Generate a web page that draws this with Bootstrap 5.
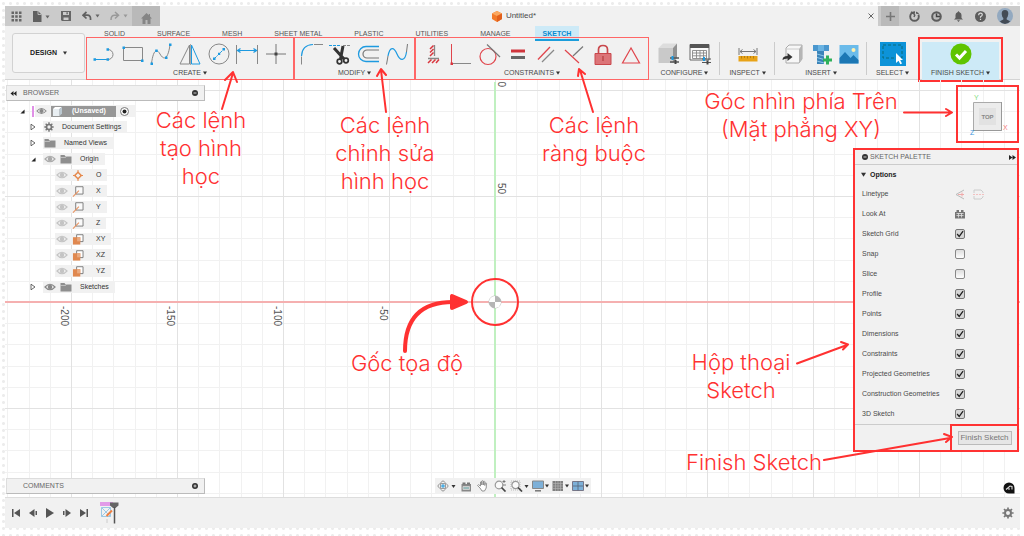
<!DOCTYPE html>
<html lang="vi">
<head>
<meta charset="utf-8">
<meta name="viewport" content="width=device-width, initial-scale=1">
<title>Untitled* - Sketch</title>
<link href="https://cdn.jsdelivr.net/npm/bootstrap@5.3.0/dist/css/bootstrap.min.css" rel="stylesheet">
<style>
:root{--ink:#4a4a4a;--chrome:#f1f1f1;--strip:#cbcbcb;--note:#ff3131}
body{font-family:"Liberation Sans",Arial,sans-serif;font-size:7px;line-height:10px;color:var(--ink);
 background:#fff radial-gradient(circle,#ececec 1px,transparent 2px) 0 0/7px 7px;padding:6px 4px 8px 5px}
button{font:inherit;color:inherit;background:none;border:0;padding:0;line-height:inherit}
svg{display:block;flex:none;fill:none}
.app{min-height:calc(100vh - 14px);background:#fff}
.titlebar{height:20px;background:var(--strip)}
.quick{width:127px;padding:0 4px}
.quick button,.tools-right button{width:14px;height:20px;display:flex;align-items:center;justify-content:center}
.quick .wide,.tools-right .wide{width:19px}
.home-tab{width:28px;background:#b9b9b9;display:flex;align-items:center;justify-content:center}
.doc-tab{background:var(--chrome);font-size:8px}
.tools-right .new-tab{width:18px;background:#bababa}
.tools-right{width:142px;padding:0 5px 0 3px}
.ribbon{height:54px;background:var(--chrome);border-bottom:1px solid #d4d4d4}
.design{width:73px;height:40px;margin:7px 1px 0 7px;border:1px solid #d2d2d2;border-radius:3px;font-weight:bold;color:#222;background:#f5f5f5}
.tabs{height:11px;padding-left:10px;gap:16px}
.tabs a{color:#555;text-decoration:none;padding:3px 8px 0;height:11px}
.tabs a.active{height:15px;background:#cdeaf7;color:#0a8ad0;font-weight:bold;border-bottom:2px solid #1b9ddb}
.tool-group{height:43px;padding:4px 3px 0;border:1px solid transparent;display:flex;flex-direction:column;position:relative}
.tool-group.noted{border-color:#f66}
.tool-group .cap{margin-top:2px;width:100%;text-align:center}
.tool-group .set{display:flex;justify-content:space-around}
.tool-group .set button{flex:1 0 0;display:flex;justify-content:center}
.rule::after{content:"";position:absolute;right:-1px;top:4px;bottom:4px;width:1px;background:#ccc}
.w-create{width:208px}.w-modify{width:121px}.w-cons{width:234px}.w-conf{width:71px}.w-insp{width:55px}.w-ins{width:92px}.w-sel{width:51px}
.w-fin{width:85px;height:45px;border:2px solid #f33;padding:3px 2px 0}
.w-fin .fill{background:#cdeaf7;height:38px}
.canvas{display:grid;grid-template-columns:1fr auto 1fr;padding:5px 1px 3px;position:relative}
.sheet{position:absolute;inset:0;width:100%;height:100%}
.panel-bar{width:199px;height:16px;background:var(--chrome);border:1px solid #ddd;border-right-color:#bbb;border-bottom-color:#bbb;color:#666;padding:0 6px 0 3px}
.panel-bar .mark-slot{width:13px}
.tree{list-style:none;margin:2px 0 0;padding:0;color:#333}
.tree li{height:16px;display:flex;align-items:center}
.tree .tw{width:12px;height:12px;display:flex;align-items:center;justify-content:center}
.tree .bar{background:var(--chrome);height:12px;display:flex;align-items:center;padding:0 6px 0 1px}
.lv0{padding-left:10px}.lv1{padding-left:21px}.lv2{padding-left:49px}
.lv1 .bar{margin-left:4px}
.unsaved{background:#979797;color:#fff;font-weight:bold;height:11px;width:65px;padding-left:2px;gap:10px;display:flex;align-items:center}
.tag{width:2px;height:11px;background:#e090e6;margin-right:1px;margin-left:4px}
.nav-strip{height:16px;background:var(--chrome);padding:0 2px;gap:3px}
.nav-strip button{display:flex;align-items:center;height:16px}
.cube-box{width:63px;height:58px;border:2px solid #f33}
.palette{width:166px;border:2px solid #f33;background:var(--chrome);margin-top:5px}
.palette header{height:15px;border-bottom:1px solid #ccc;color:#666;padding:0 1px 0 7px;gap:2px}
.palette h2{font-size:7px;line-height:20px;margin:0;font-weight:bold;color:#222;height:19px;padding-left:6px}
.opt{height:20px;padding-left:7px}
.opt label,.opt .lbl{width:93px}
.opt input{appearance:none;width:10px;height:10px;margin:0;border:1px solid #888;border-radius:2px;background:linear-gradient(#ddd,#fff)}
.opt input:checked{border-color:#777;background:url("data:image/svg+xml,%3Csvg xmlns='http://www.w3.org/2000/svg' viewBox='0 0 7 7'%3E%3Cpath d='M1 3.5 2.8 5.6 6.2 1' fill='none' stroke='%23222' stroke-width='1.1'/%3E%3C/svg%3E") #d5d5d5}
.palette footer{height:26px;border-top:1px solid #ccc}
.fin-box{width:69px;border:2px solid #f33;margin:-1px -2px -2px 0}
.fin-box button{font-size:8px;line-height:10px;width:54px;height:14px;border:1px solid #bbb;background:#e6e6e6;color:#777;white-space:nowrap}
.timeline{height:31px;background:var(--chrome);border-top:1px solid #ddd;padding:0 6px 0 2px}
.timeline button{width:17px;height:20px;display:flex;align-items:center;justify-content:center}
.note{position:absolute;color:var(--note);font-family:Inter,"Open Sans",sans-serif;font-weight:300;font-size:22px;line-height:28px;text-align:center;margin:0;white-space:nowrap}
.arrows{position:absolute;top:0;pointer-events:none;stroke:var(--note);stroke-width:2;stroke-linecap:round;stroke-linejoin:round}
.from-left{left:-5px}.from-right{right:0}
.n1{left:146px;top:100px;width:100px}.n2{left:320px;top:105px;width:120px}.n3{left:529px;top:105px;width:120px}
.n4{right:114px;top:81px;width:210px}.n5{left:337px;top:343px;width:130px}.n6{right:219px;top:342px;width:120px}.n7{right:191px;top:442px;width:150px}
</style>
<script src="https://cdn.jsdelivr.net/npm/bootstrap@5.3.0/dist/js/bootstrap.bundle.min.js"></script>
</head>
<body>
<svg width="0" height="0" class="position-absolute" aria-hidden="true">
<symbol id="eye" viewBox="0 0 12 8"><path d="M1 4Q6-1.500 11 4Q6 9.500 1 4Z" fill="#f4f4f4" stroke="currentColor" stroke-width="1.200"/><circle cx="6" cy="4" r="2.300" fill="currentColor"/></symbol>
<symbol id="folder" viewBox="0 0 12 10"><path d="M.5 9.500V1h4l1 1.500h6v7z" fill="#8e8e8e"/><path d="M.5 3.500h5l1-1" stroke="#ddd" stroke-width=".6"/></symbol>
<symbol id="shut" viewBox="0 0 6 8"><path d="M1 1.200 5 4 1 6.800Z" stroke="#444" stroke-width=".8" fill="#fff"/></symbol>
<symbol id="open" viewBox="0 0 6 6"><path d="M5.500.5v5h-5z" fill="#222"/></symbol>
<symbol id="gear" viewBox="0 0 12 12"><circle cx="6" cy="6" r="3" stroke="#777" stroke-width="2"/><path d="M6 .4v2M6 9.600v2M.4 6h2M9.600 6h2M2 2l1.500 1.500M8.500 8.500 10 10M10 2 8.500 3.500M3.500 8.500 2 10" stroke="#777" stroke-width="1.700"/></symbol>
<symbol id="axis" viewBox="0 0 12 12"><path d="M3.500 .8h8v8h-8z" fill="#fafafa" stroke="#777"/><path d="M.5 11.500 7 5" stroke="#e8915e" stroke-width="1.200"/></symbol>
<symbol id="plane" viewBox="0 0 12 12"><path d="M4.500.8h7v7.500h-7z" fill="#fff" stroke="#777"/><path d="M.5 3.500h8v8h-8z" fill="#e0884f"/><path d="M5 3.500h3.500V8H5z" fill="#e9aa80"/></symbol>
<symbol id="caret" viewBox="0 0 4 4"><path d="M0 .5h4L2 3.800z" fill="#333"/></symbol>
<symbol id="minus" viewBox="0 0 6 6"><circle cx="3" cy="3" r="3" fill="#333"/><path d="M1.500 3h3" stroke="#ccc"/></symbol>
</svg>
<div class="app d-flex flex-column position-relative">
<div class="titlebar d-flex">
 <div class="quick d-flex align-items-center justify-content-between">
  <button aria-label="Data panel"><svg width="11" height="11" viewBox="0 0 11 11"><path d="M.5.500h2.500v2.500H.5zM4.200.500h2.500v2.500H4.200zM8 .500h2.500v2.500H8zM.5 4.200h2.500v2.500H.5zM4.200 4.200h2.500v2.500H4.200zM8 4.200h2.500v2.500H8zM.5 8h2.500v2.500H.5zM4.200 8h2.500v2.500H4.200zM8 8h2.500v2.500H8z" fill="#666"/></svg></button>
  <button aria-label="File" class="wide"><svg width="18" height="11" viewBox="0 0 18 11"><path d="M1 0h5l3.500 3.500V11H1z" fill="#606060"/><path d="M6 0v3.500h3.500" stroke="#ccc" stroke-width=".8"/><path d="M13.500 4.500h4l-2 3z" fill="#666"/></svg></button>
  <button aria-label="Save"><svg width="10" height="10" viewBox="0 0 10 10"><path d="M0 0h10v10H1L0 9z" fill="#666"/><path d="M2 1h6v3H2zM2.500 6.500h5V9h-5z" fill="#ccc"/><path d="M5.500 1.300h1.200v2H5.500z" fill="#555"/></svg></button>
  <button aria-label="Undo" class="wide"><svg width="18" height="10" viewBox="0 0 18 10"><path d="M4.500 1 1 4.200 4.500 7.500M1.500 4.200H5Q9 4 8.500 9" stroke="#606060" stroke-width="1.700"/><path d="M13.500 3.500h4l-2 3z" fill="#666"/></svg></button>
  <button aria-label="Redo" class="wide"><svg width="18" height="10" viewBox="0 0 18 10"><path d="M5 1l3.500 3.200L5 7.500M8 4.200H5Q1 4 1 9" stroke="#999" stroke-width="1.500"/><path d="M13.500 3.500h4l-2 3z" fill="#999"/></svg></button>
 </div>
 <button class="home-tab" aria-label="Home"><svg class="mt-1" width="11" height="11" viewBox="0 0 11 11"><path d="M5.500 0 0 5.500h1.500V11h3V7h2v4h3V5.500H11L9 3.500V1H7.800v1.300z" fill="#858585"/></svg></button>
 <div class="doc-tab flex-grow-1 d-flex align-items-center">
  <div class="flex-grow-1 d-flex align-items-center justify-content-center gap-1"><svg width="10" height="11" viewBox="0 0 10 11"><path d="M5 0l5 2.500v5.500L5 11 0 8V2.500z" fill="#f27a2a"/><path d="M5 0l5 2.500L5 5 0 2.500z" fill="#fba860"/><path d="M5 5l5-2.500V8l-5 3z" fill="#e2601c"/></svg><span>Untitled*</span></div>
  <button aria-label="Close" class="me-1"><svg width="6" height="6" viewBox="0 0 6 6"><path d="M.5.500l5 5M5.500.500l-5 5" stroke="#666"/></svg></button>
 </div>
 <div class="tools-right d-flex justify-content-between">
  <button class="new-tab" aria-label="New"><svg width="9" height="9" viewBox="0 0 9 9"><path d="M4.500 0v9M0 4.500h9" stroke="#777" stroke-width="1.600"/></svg></button>
  <button aria-label="Extensions"><svg width="11" height="11" viewBox="0 0 11 11"><circle cx="5.500" cy="5.500" r="4.300" stroke="#5c5c5c" stroke-width="1.900"/><path d="M2 1l4 2.500-1 2.500" stroke="#5c5c5c" stroke-width="1.500"/><path d="M6.500 0v3.500h3" stroke="#cbcbcb"/></svg></button>
  <button aria-label="Job status"><svg width="11" height="11" viewBox="0 0 11 11"><circle cx="5.500" cy="5.500" r="4.300" fill="#bbb" stroke="#5c5c5c" stroke-width="2"/><path d="M5.500 2.500v3H9" stroke="#444" stroke-width="1.400"/></svg></button>
  <button aria-label="Notifications"><svg width="9" height="11" viewBox="0 0 9 11"><path d="M4.500 0l1 1.200Q7.500 2 7.500 4v3L9 8.500H0L1.500 7V4Q1.500 2 3.500 1.200zM3 9.200h3L4.500 11z" fill="#5c5c5c"/></svg></button>
  <button aria-label="Help"><svg width="11" height="11" viewBox="0 0 11 11"><circle cx="5.500" cy="5.500" r="5.500" fill="#5c5c5c"/><path d="M3.700 4.200q0-2 1.800-2t1.800 1.600q0 1-1.800 2v1M5.500 7.800v1.300" stroke="#ddd" stroke-width="1.200"/></svg></button>
  <button aria-label="Account" class="wide"><svg width="16" height="16" viewBox="0 0 16 16"><circle cx="8" cy="8" r="8" fill="#93a9c0"/><path d="M8 2q3.500 0 3.300 4-.4 3-1.600 4v1.500l3.500 1.700Q11 16 8 16t-5.200-2.800l3.500-1.700V10Q5 9 4.700 6 4.500 2 8 2z" fill="#434b55"/></svg></button>
 </div>
</div>
<div class="ribbon d-flex">
 <button class="design">DESIGN <svg class="d-inline ms-1" width="4" height="4"><use href="#caret"/></svg></button>
 <div class="flex-grow-1 d-flex flex-column">
 <nav class="tabs d-flex"><a href="#">SOLID</a><a href="#">SURFACE</a><a href="#">MESH</a><a href="#" class="text-nowrap">SHEET METAL</a><a href="#">PLASTIC</a><a href="#">UTILITIES</a><a href="#">MANAGE</a><a href="#" class="active">SKETCH</a></nav>
 <div class="d-flex">
  <div class="tool-group noted w-create"><div class="set">
   <button aria-label="Line"><svg width="24" height="24" viewBox="0 0 24 24"><path d="M3 17.500h13a5 5 0 0 0 0-10" stroke="#888"/><path d="M3 17.500h11" stroke="#1d9ae0"/><path d="M1.500 16.200h2.500v2.500H1.500zM14.500 16.200h2.500v2.500h-2.500zM14.500 6.200h2.500v2.500h-2.500z" fill="#1d9ae0"/></svg></button>
   <button aria-label="Rectangle"><svg width="24" height="24" viewBox="0 0 24 24"><path d="M2.500 5.500h19v13h-19z" stroke="#888"/><path d="M1.500 4.500h2.500V7H1.500zM20 17.500h2.500V20H20z" fill="#1d9ae0"/></svg></button>
   <button aria-label="Spline"><svg width="24" height="24" viewBox="0 0 24 24"><path d="M2.500 21.500C4 10 7 5 11 12c4 7 8 5 10-9" stroke="#888"/><path d="M1.500 20.500H4V23H1.500zM6.200 7.500h2.500V10H6.200zM16 14.500h2.500V17H16zM20 1.500h2.500V4H20z" fill="#1d9ae0"/></svg></button>
   <button aria-label="Mirror"><svg width="24" height="24" viewBox="0 0 24 24"><path d="M11.500 3v19H2z" stroke="#888"/><path d="M13.500 3v19H22z" stroke="#1d9ae0"/><path d="M12.500 2v21" stroke="#888" stroke-width=".7"/></svg></button>
   <button aria-label="Circle"><svg width="24" height="24" viewBox="0 0 24 24"><circle cx="12" cy="12" r="10" stroke="#888"/><path d="M7.500 16.500 16.500 7.500" stroke="#1d9ae0" stroke-dasharray="3 1"/><path d="M6 15.500h2.500V18H6zM15.500 6H18v2.500h-2.500zM11 10.800h2.200V13H11z" fill="#1d9ae0"/></svg></button>
   <button aria-label="Dimension"><svg width="24" height="24" viewBox="0 0 24 24"><path d="M1.500 3v19M22.500 3v19" stroke="#888"/><path d="M3 8.500h18M5.500 6.500l-3 2 3 2M18.500 6.500l3 2-3 2" stroke="#1d9ae0" stroke-width="1.200"/></svg></button>
   <button aria-label="Point"><svg width="24" height="24" viewBox="0 0 24 24"><path d="M12 2v20M2 12h20" stroke="#777"/><path d="M10.500 10.500h3v3h-3z" fill="#444"/></svg></button>
  </div><button class="cap">CREATE <svg class="d-inline" width="4" height="4"><use href="#caret"/></svg></button></div>
  <div class="tool-group noted w-modify"><div class="set">
   <button aria-label="Fillet"><svg width="24" height="24" viewBox="0 0 24 24"><path d="M1.500 22.500v-8M14 2.500h9" stroke="#888"/><path d="M1.500 14Q2 3 13 2.500" stroke="#1d9ae0" stroke-width="1.200"/></svg></button>
   <button aria-label="Trim"><svg width="24" height="24" viewBox="0 0 24 24"><path d="M1 3.500h12" stroke="#1d9ae0" stroke-dasharray="3 1"/><path d="M15 3.500h8" stroke="#888" stroke-dasharray="3 1"/><path d="M6 6l10 11M15 4 12.500 17" stroke="#333" stroke-width="3"/><circle cx="11.500" cy="19.500" r="2.300" stroke="#333" stroke-width="1.700"/><circle cx="18" cy="18.500" r="2.300" stroke="#333" stroke-width="1.700"/></svg></button>
   <button aria-label="Offset"><svg width="24" height="24" viewBox="0 0 24 24"><path d="M22 4.500H9a7.500 7.500 0 0 0 0 15h13" stroke="#1d9ae0" stroke-width="1.300"/><path d="M22 8H10a4 4 0 0 0 0 8h12" stroke="#777" stroke-width="1.200"/></svg></button>
   <button aria-label="Curve"><svg width="24" height="24" viewBox="0 0 24 24"><path d="M1.500 22.500 3 14M22.500 2l-1 8" stroke="#777"/><path d="M3 14C5 4 9 5 12 12s8 8 9.500-2" stroke="#1d9ae0" stroke-width="1.200"/></svg></button>
  </div><button class="cap">MODIFY <svg class="d-inline" width="4" height="4"><use href="#caret"/></svg></button></div>
  <div class="tool-group noted w-cons"><div class="set">
   <button aria-label="Horizontal/Vertical"><svg width="24" height="24" viewBox="0 0 24 24"><path d="M13.500 3v11M7 16.500h11" stroke="#888" stroke-width="1.300"/><path d="M9 7l3.500-3.500M9 10.500 12.500 7M9 14l3.500-3.500M7 21l3.500-3.500M11 21l3.500-3.500M15 21l3-3.500" stroke="#d9363e" stroke-width="1.500"/></svg></button>
   <button aria-label="Coincident"><svg width="24" height="24" viewBox="0 0 24 24"><path d="M2.500 2v19" stroke="#e0454c"/><path d="M3 21.500h19" stroke="#888"/><path d="M1.500 20.500h2.500V23H1.500z" fill="#d9363e"/></svg></button>
   <button aria-label="Tangent"><svg width="24" height="24" viewBox="0 0 24 24"><circle cx="10" cy="14.500" r="8" stroke="#e0454c" stroke-width="1.200"/><path d="M9 2.500 22 15" stroke="#777" stroke-width="1.200"/></svg></button>
   <button aria-label="Equal"><svg width="24" height="24" viewBox="0 0 24 24"><path d="M5 9h14" stroke="#d0353c" stroke-width="3"/><path d="M5 15.500h14" stroke="#666" stroke-width="3"/></svg></button>
   <button aria-label="Parallel"><svg width="24" height="24" viewBox="0 0 24 24"><path d="M4 17.500 16 5" stroke="#e0454c" stroke-width="1.300"/><path d="M8 20 20 8" stroke="#888" stroke-width="1.300"/></svg></button>
   <button aria-label="Perpendicular"><svg width="24" height="24" viewBox="0 0 24 24"><path d="M3 8l14 13" stroke="#e0454c" stroke-width="1.200"/><path d="M11 14 21 4.500" stroke="#777" stroke-width="1.200"/></svg></button>
   <button aria-label="Fix"><svg width="24" height="24" viewBox="0 0 24 24"><path d="M7.500 12V7.500q0-4 4.500-4t4.500 4V12" stroke="#c9474c" stroke-width="1.700"/><path d="M4 11.500h16v11H4z" fill="#dc7478" stroke="#c9474c"/><path d="M12 14v5" stroke="#a33"/></svg></button>
   <button aria-label="Symmetry"><svg width="24" height="24" viewBox="0 0 24 24"><path d="M12 6 3.500 21h17z" stroke="#e0454c" stroke-width="1.200"/></svg></button>
  </div><button class="cap">CONSTRAINTS <svg class="d-inline" width="4" height="4"><use href="#caret"/></svg></button></div>
  <div class="tool-group rule w-conf"><div class="set">
   <button aria-label="Configure"><svg width="24" height="24" viewBox="0 0 24 24"><path d="M1.500 6 6 1.500h14L16 6z" fill="#ddd"/><path d="M1.500 6H16v15H1.500z" fill="#c9c9c9"/><path d="M16 6l4-4.500V16l-4 5z" fill="#929292"/><path d="M13 16h9M13 20h9" stroke="#555" stroke-width="1.300"/><path d="M15.500 14v4" stroke="#1d9ae0" stroke-width="2"/><path d="M18.500 18v4" stroke="#444" stroke-width="2"/></svg></button>
   <button aria-label="Table"><svg width="24" height="24" viewBox="0 0 24 24"><path d="M2 2.500h19V18H2z" fill="#fafafa" stroke="#666"/><path d="M2 2h19v4H2z" fill="#555"/><path d="M4.500 8.500h14v8h-14zM4.500 11h14M4.500 13.800h14M8.500 8.500v8M12 8.500v8M15.500 8.500v8" stroke="#888" stroke-width=".9"/><path d="M14 17h9M14 20.500h9" stroke="#555" stroke-width="1.200"/><path d="M16 15v4" stroke="#1d9ae0" stroke-width="2"/><path d="M19.500 18.500v4" stroke="#444" stroke-width="2"/></svg></button>
  </div><button class="cap">CONFIGURE <svg class="d-inline" width="4" height="4"><use href="#caret"/></svg></button></div>
  <div class="tool-group rule w-insp"><div class="set"><button aria-label="Measure"><svg width="24" height="24" viewBox="0 0 24 24"><path d="M3 6v7M21 6v7M4 9.500h16M6.500 7.500 4 9.500l2.500 2M17.500 7.500 20 9.500l-2.500 2" stroke="#777"/><path d="M2.500 14h19v5.500h-19z" fill="#e8a317"/><path d="M5.500 14v2.500M8.500 14v2M11.500 14v2.500M14.500 14v2M17.500 14v2.500" stroke="#b57e12"/></svg></button></div><button class="cap">INSPECT <svg class="d-inline" width="4" height="4"><use href="#caret"/></svg></button></div>
  <div class="tool-group rule w-ins"><div class="set">
   <button aria-label="Insert derive"><svg width="24" height="24" viewBox="0 0 24 24"><path d="M5 6l3-3h13v14l-3 4H5z" fill="#f7f7f7" stroke="#aaa"/><path d="M18 7l3-4v14l-3 4z" fill="#b5b5b5"/><path d="M5 7h13" stroke="#ccc"/><path d="M1.500 18q0-4 5-4V11l5 4-5 4v-2.500q-3 0-5 1.500z" fill="#333"/></svg></button>
   <button aria-label="Insert fastener"><svg width="24" height="24" viewBox="0 0 24 24"><path d="M4 3h16v6H4z" fill="#4a97ce"/><path d="M9 3h6v6H9z" fill="#6ab3e2"/><path d="M8 9h7v13H8z" fill="#3b84b8"/><path d="M8 12l7 2M8 15.500l7 2M8 19l7 2" stroke="#8cc6ea"/><path d="M18.500 13.500v9M14 18h9" stroke="#2fb15a" stroke-width="3"/></svg></button>
   <button aria-label="Insert image"><svg width="24" height="24" viewBox="0 0 24 24"><path d="M2.500 3h19v18.500h-19z" fill="#6bbbea"/><path d="M2.500 16 8 10l5.500 6 3-3 5 5v3.500h-19z" fill="#1c77b4"/><circle cx="16.500" cy="8" r="2" fill="#fff1b0"/></svg></button>
  </div><button class="cap">INSERT <svg class="d-inline" width="4" height="4"><use href="#caret"/></svg></button></div>
  <div class="tool-group w-sel"><div class="set"><button aria-label="Select"><svg width="26" height="24" viewBox="0 0 26 24"><path d="M0 0h26v24H0z" fill="#0d93d8"/><path d="M3 3h19v13H3z" stroke="#0b6a78" stroke-dasharray="3 2"/><path d="M16 11v10l2.500-2.300 1.800 3.500 1.700-.8-1.800-3.400H23z" fill="#fff"/></svg></button></div><button class="cap">SELECT <svg class="d-inline" width="4" height="4"><use href="#caret"/></svg></button></div>
  <div class="tool-group w-fin"><div class="fill"><div class="set"><button aria-label="Finish"><svg width="24" height="24" viewBox="0 0 24 24"><circle cx="12" cy="12" r="10.500" fill="#5fc400"/><path d="M7 12.500l3.500 3.500 6.500-7" stroke="#fff" stroke-width="3"/></svg></button></div><button class="cap text-nowrap">FINISH SKETCH <svg class="d-inline" width="4" height="4"><use href="#caret"/></svg></button></div></div>
 </div></div>
</div>
<main class="canvas flex-grow-1">
 <svg class="sheet" font-size="10">
  <defs><pattern id="grid" x="490" y="222" width="106" height="106" patternUnits="userSpaceOnUse"><path d="M21.500 0v106M42.500 0v106M64.500 0v106M85.500 0v106M0 21.500h106M0 42.500h106M0 64.500h106M0 85.500h106" stroke="#f1f1f1"/><path d="M.5 0v106M0 .5h106" stroke="#e2e2e2"/></pattern></defs>
  <rect width="100%" height="100%" fill="url(#grid)"/>
  <line x1="0" y1="222" x2="100%" y2="222" stroke="#f5b0b0" stroke-width="2"/>
  <line x1="490" y1="2" x2="490" y2="100%" stroke="#c0f0c0" stroke-width="2"/>
  <g fill="#555"><text transform="translate(56 226) rotate(90)">-200</text><text transform="translate(162 226) rotate(90)">-150</text><text transform="translate(269 226) rotate(90)">-100</text><text transform="translate(375 226) rotate(90)">-50</text>
  <text transform="translate(493 114) rotate(90)" text-anchor="end">50</text><text transform="translate(493 7) rotate(90)" text-anchor="end">0</text></g>
  <circle cx="490" cy="222" r="6" fill="#ddd" stroke="#bbb"/><path d="M490 222h6a6 6 0 0 1-6 6z" fill="#fff"/><path d="M490 222v-6a6 6 0 0 0-6 6z" fill="#fff"/><path d="M490 222v-6a6 6 0 0 1 6 6zM490 222v6a6 6 0 0 1-6-6z" fill="#b5b5b5"/>
 </svg>
 <div class="d-flex flex-column position-relative">
  <div class="panel-bar d-flex align-items-center"><span class="mark-slot"><svg width="7" height="5" viewBox="0 0 6 5"><path d="M3 0v5L0 2.500zM6 0v5L3 2.500z" fill="#222"/></svg></span><span class="flex-grow-1">BROWSER</span><svg width="6" height="6"><use href="#minus"/></svg></div>
  <ul class="tree">
   <li class="lv0"><span class="tw"><svg width="5" height="5"><use href="#open"/></svg></span><span class="tag"></span><span class="bar"><svg width="11" height="8" color="#888" class="me-1"><use href="#eye"/></svg><span class="unsaved"><svg width="9" height="9" viewBox="0 0 9 9"><path d="M0 2h6.500v7H0z" fill="#e8eef2"/><path d="M0 2l2-2h7L6.500 2z" fill="#fff"/><path d="M6.500 2 9 0v6.500L6.500 9z" fill="#bbc8d0"/></svg>(Unsaved)</span><svg class="ms-1" width="9" height="9" viewBox="0 0 9 9"><circle cx="4.500" cy="4.500" r="4" fill="#fff" stroke="#777"/><circle cx="4.500" cy="4.500" r="2" fill="#222"/></svg></span></li>
   <li class="lv1"><span class="tw"><svg width="6" height="8"><use href="#shut"/></svg></span><span class="bar"><svg width="10" height="10" class="me-2"><use href="#gear"/></svg>Document Settings</span></li>
   <li class="lv1"><span class="tw"><svg width="6" height="8"><use href="#shut"/></svg></span><span class="bar"><svg width="12" height="10" class="me-2"><use href="#folder"/></svg>Named Views</span></li>
   <li class="lv1"><span class="tw"><svg width="5" height="5"><use href="#open"/></svg></span><span class="bar"><svg width="12" height="8" color="#aaa" class="me-1"><use href="#eye"/></svg><svg width="12" height="10" class="me-2"><use href="#folder"/></svg>Origin</span></li>
   <li class="lv2"><span class="bar"><svg width="12" height="8" color="#c4c4c4" class="me-1"><use href="#eye"/></svg><svg width="12" height="11" viewBox="0 0 12 11" class="me-2"><path d="M6 2.200 9.300 5.500 6 8.800 2.700 5.500z" stroke="#e58a4e" stroke-width="1.500"/><path d="M6 0v3M6 8v3M1 5.500h3M8 5.500h3" stroke="#e58a4e"/></svg><span class="ps-1">O</span></span></li>
   <li class="lv2"><span class="bar"><svg width="12" height="8" color="#c4c4c4" class="me-1"><use href="#eye"/></svg><svg width="12" height="11" class="me-2"><use href="#axis"/></svg><span class="ps-1">X</span></span></li>
   <li class="lv2"><span class="bar"><svg width="12" height="8" color="#c4c4c4" class="me-1"><use href="#eye"/></svg><svg width="12" height="11" class="me-2"><use href="#axis"/></svg><span class="ps-1">Y</span></span></li>
   <li class="lv2"><span class="bar"><svg width="12" height="8" color="#c4c4c4" class="me-1"><use href="#eye"/></svg><svg width="12" height="11" class="me-2"><use href="#axis"/></svg><span class="ps-1">Z</span></span></li>
   <li class="lv2"><span class="bar"><svg width="12" height="8" color="#c4c4c4" class="me-1"><use href="#eye"/></svg><svg width="12" height="11" class="me-2"><use href="#plane"/></svg><span class="ps-1">XY</span></span></li>
   <li class="lv2"><span class="bar"><svg width="12" height="8" color="#c4c4c4" class="me-1"><use href="#eye"/></svg><svg width="12" height="11" class="me-2"><use href="#plane"/></svg><span class="ps-1">XZ</span></span></li>
   <li class="lv2"><span class="bar"><svg width="12" height="8" color="#c4c4c4" class="me-1"><use href="#eye"/></svg><svg width="12" height="11" class="me-2"><use href="#plane"/></svg><span class="ps-1">YZ</span></span></li>
   <li class="lv1"><span class="tw"><svg width="6" height="8"><use href="#shut"/></svg></span><span class="bar"><svg width="12" height="8" color="#888" class="me-1"><use href="#eye"/></svg><svg width="12" height="10" class="me-2"><use href="#folder"/></svg>Sketches</span></li>
  </ul>
  <div class="panel-bar d-flex align-items-center mt-auto"><span class="mark-slot"></span><span class="flex-grow-1">COMMENTS</span><svg width="6" height="6" viewBox="0 0 6 6"><circle cx="3" cy="3" r="3" fill="#333"/><path d="M1.500 3h3M3 1.500v3" stroke="#eee" stroke-width=".8"/></svg></div>
 </div>
 <div class="nav-strip d-flex align-self-end position-relative">
  <button aria-label="Orbit"><svg width="19" height="12" viewBox="0 0 19 12"><ellipse cx="6" cy="6" rx="5" ry="2.500" stroke="#999"/><ellipse cx="6" cy="6" rx="2.500" ry="5" stroke="#999"/><path d="M6 4v4M4 6h4" stroke="#1d9ae0"/><path d="M14.500 5h4l-2 3z" fill="#333"/></svg></button>
  <button aria-label="Look at"><svg width="14" height="11" viewBox="0 0 14 11"><path d="M2.500 3h9.500v7.500H2.500z" fill="#888"/><path d="M3.500 1.500h3v2h-3zM8 1.500h3v2H8z" fill="#777"/><path d="M4 5.500h6.500v3H4z" fill="#9bb" stroke="#ccc"/></svg></button>
  <button aria-label="Pan"><svg width="14" height="12" viewBox="0 0 14 12"><path d="M4 8 1.500 5.500l1-.8L4.500 6V2q1-.8 1.300 0V5 1Q7 .2 7.300 1v4l.2-3.500q1-.7 1.300.2V5.500l.5-2.500q1-.5 1.200.3L10.200 8 8.500 11H6z" fill="#fff" stroke="#888" stroke-width=".9"/></svg></button>
  <button aria-label="Zoom"><svg width="14" height="12" viewBox="0 0 14 12"><circle cx="6" cy="5" r="3.800" fill="#fafafa" stroke="#999" stroke-width="1.200"/><path d="M8.500 7.500 12.500 11.500" stroke="#444" stroke-width="1.700"/><path d="M9.500 1.500h3M11 0v3M10 5h3" stroke="#666" stroke-width=".8"/></svg></button>
  <button aria-label="Fit"><svg width="19" height="12" viewBox="0 0 19 12"><path d="M1 1h9v9H1z" stroke="#bbb" stroke-dasharray="1 1"/><circle cx="5.500" cy="5" r="3.600" fill="#fafafa" stroke="#999" stroke-width="1.200"/><path d="M8 7.500 12 11.500" stroke="#444" stroke-width="1.700"/><path d="M14.500 5h4l-2 3z" fill="#333"/></svg></button>
  <button aria-label="Display"><svg width="17" height="12" viewBox="0 0 17 12"><path d="M.5 1h11v7.500H.5z" fill="#7db0d8" stroke="#888"/><path d="M3 10.800h6" stroke="#777" stroke-width="1.500"/><path d="M13 4.500h4l-2 3z" fill="#333"/></svg></button>
  <button aria-label="Grid"><svg width="17" height="12" viewBox="0 0 17 12"><path d="M.5 1h10.500v10H.5z" fill="#808080"/><path d="M3.500 1v10M6 1v10M8.500 1v10M.5 3.500H11M.5 6H11M.5 8.500H11" stroke="#b5b5b5" stroke-width=".6"/><path d="M13 4.500h4l-2 3z" fill="#333"/></svg></button>
  <button aria-label="Viewports"><svg width="17" height="12" viewBox="0 0 17 12"><path d="M.5 1.500h11v9H.5z" fill="#7db0d8" stroke="#778"/><path d="M6 1.500v9M1 6h10" stroke="#567" stroke-width=".8"/><path d="M13 4.500h4l-2 3z" fill="#333"/></svg></button>
 </div>
 <div class="d-flex flex-column align-items-end position-relative">
  <div class="cube-box"><svg width="59" height="54" viewBox="0 0 59 54" font-size="7"><path d="M15.500 15.500h28v28h-28z" fill="#ececec" stroke="#aaa"/><path d="M21 21h17v17H21z" fill="#e2e2e2"/><path d="M15 43.500h28.500V15" stroke="#999"/><text x="29.500" y="32" text-anchor="middle" font-size="6" font-weight="bold" fill="#888">TOP</text><text x="16" y="13" fill="#7fdc7f">Y</text><text x="45" y="43" fill="#f58080">X</text><text x="12" y="48" fill="#3a95dd">Z</text></svg></div>
  <section class="palette">
   <header class="d-flex align-items-center"><svg width="6" height="6"><use href="#minus"/></svg><span class="flex-grow-1">SKETCH PALETTE</span><svg width="7" height="5" viewBox="0 0 7 5"><path d="M0 0v5l3.500-2.500zM3.500 0v5L7 2.500z" fill="#222"/></svg></header>
   <h2 class="d-flex align-items-center gap-1"><svg width="5" height="5"><use href="#caret"/></svg>Options</h2>
   <div class="opt d-flex align-items-center"><span class="lbl">Linetype</span><svg width="10" height="11" viewBox="0 0 10 11"><path d="M9 1 1 5.500 9 10" stroke="#bbb"/><path d="M3 5.500h6M7 3.500v4" stroke="#f0aaaa"/></svg><svg class="ms-2" width="11" height="11" viewBox="0 0 11 11"><path d="M1 4V1h7l2 2v1M1 7v3h7l2-2V7" stroke="#ccc"/><path d="M0 5.500h11" stroke="#f3c0c0" stroke-dasharray="2 1"/></svg></div>
   <div class="opt d-flex align-items-center"><span class="lbl">Look At</span><svg width="10" height="10" viewBox="0 0 10 10"><path d="M0 3h10v6.500H0z" fill="#777"/><path d="M1.500 1h2.500v2H1.500zM6 1h2.500v2H6z" fill="#777"/><path d="M1.500 4.500h7M1.500 6.500h7M3.500 4v4.500M6.500 4v4.500" stroke="#e0e0e0" stroke-width=".8"/></svg></div>
   <div class="opt d-flex align-items-center"><label for="o1">Sketch Grid</label><input type="checkbox" id="o1" checked></div>
   <div class="opt d-flex align-items-center"><label for="o2">Snap</label><input type="checkbox" id="o2"></div>
   <div class="opt d-flex align-items-center"><label for="o3">Slice</label><input type="checkbox" id="o3"></div>
   <div class="opt d-flex align-items-center"><label for="o4">Profile</label><input type="checkbox" id="o4" checked></div>
   <div class="opt d-flex align-items-center"><label for="o5">Points</label><input type="checkbox" id="o5" checked></div>
   <div class="opt d-flex align-items-center"><label for="o6">Dimensions</label><input type="checkbox" id="o6" checked></div>
   <div class="opt d-flex align-items-center"><label for="o7">Constraints</label><input type="checkbox" id="o7" checked></div>
   <div class="opt d-flex align-items-center"><label for="o8">Projected Geometries</label><input type="checkbox" id="o8" checked></div>
   <div class="opt d-flex align-items-center"><label for="o9">Construction Geometries</label><input type="checkbox" id="o9" checked></div>
   <div class="opt d-flex align-items-center"><label for="o10">3D Sketch</label><input type="checkbox" id="o10" checked></div>
   <footer class="d-flex justify-content-end"><div class="fin-box d-flex align-items-center justify-content-center"><button>Finish Sketch</button></div></footer>
  </section>
  <button class="mt-auto me-1" aria-label="Assistant"><svg width="12" height="12" viewBox="0 0 12 12"><path d="M6 .5a5.500 5.500 0 0 1 5.500 5.500v5.500H6A5.500 5.500 0 0 1 6 .5z" fill="#111"/><path d="M3 7.500l4-3.500 2 .5v3M5 7h2" stroke="#ddd" stroke-width="1.100"/></svg></button>
 </div>
</main>
<footer class="timeline d-flex align-items-center">
 <button aria-label="Start"><svg width="8" height="8" viewBox="0 0 8 8"><path d="M0 0h1.500v8H0zM8 0v8L2 4z" fill="#555"/></svg></button>
 <button aria-label="Back"><svg width="8" height="8" viewBox="0 0 8 8"><path d="M5.500 0v8L0 4zM6.500 2H8v4H6.500z" fill="#555"/></svg></button>
 <button aria-label="Play"><svg width="8" height="10" viewBox="0 0 8 10"><path d="M0 0v10l8-5z" fill="#555"/></svg></button>
 <button aria-label="Forward"><svg width="8" height="8" viewBox="0 0 8 8"><path d="M2.500 0v8L8 4zM0 2h1.500v4H0z" fill="#555"/></svg></button>
 <button aria-label="End"><svg width="8" height="8" viewBox="0 0 8 8"><path d="M6.500 0H8v8H6.500zM0 0v8l6-4z" fill="#555"/></svg></button>
 <svg class="ms-2" width="19" height="24" viewBox="0 0 19 24"><path d="M0 1h13v4H0z" fill="#e29be8"/><path d="M1.500 6.500h9v9h-9zM1.500 6.500l9 9M10.500 6.500l-9 9" stroke="#9cc8e4"/><path d="M6.500 15 12 9.500" stroke="#f08040" stroke-width="2"/><path d="M7 18v4" stroke="#ccc"/><path d="M10 1.500h8.500v3l-3 2.500H13l-3-2.500z" fill="#666"/><path d="M14.500 6v16.500" stroke="#555" stroke-width="1.500"/></svg>
 <svg class="ms-auto" width="12" height="12"><use href="#gear"/></svg>
</footer>
<svg class="arrows from-left" width="620" height="400" viewBox="0 6 620 400">
 <path d="M222 109 233 73M225 80l8-8 4 10M386 112l-5-42M377 76l4-7 5 6M593 112 580 70M578 76l1-7 6 5"/>
 <path d="M405 351q0-49 48-49" stroke-width="4"/><path d="M452 296v12l14-6z" fill="#ff3131" stroke-width="4"/><circle cx="495" cy="302" r="23"/>
</svg>
<svg class="arrows from-right" width="240" height="480" viewBox="780 6 240 480"><path d="M904 112.500h47M946 109l6 3.500-6 3.500M797 363.500 847 345M841 342l7 2.500-5 5M824 460l126-22M944 434l8 3-6 5"/></svg>
<p class="note n1">Các lệnh<br>tạo hình<br>học</p>
<p class="note n2">Các lệnh<br>chỉnh sửa<br>hình học</p>
<p class="note n3">Các lệnh<br>ràng buộc</p>
<p class="note n4">Góc nhìn phía Trên<br>(Mặt phẳng XY)</p>
<p class="note n5">Gốc tọa độ</p>
<p class="note n6">Hộp thoại<br>Sketch</p>
<p class="note n7">Finish Sketch</p>
</div>
</body>
</html>
